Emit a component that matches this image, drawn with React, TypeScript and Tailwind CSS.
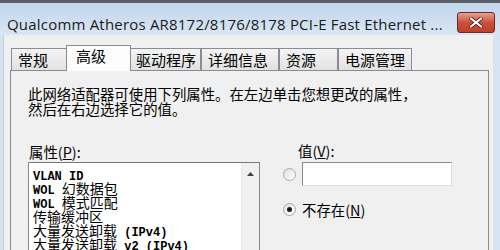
import React from 'react';

const cjk = '"Noto Sans CJK SC", "Liberation Sans", sans-serif';

// split Latin from CJK so the list can use a narrow mono for Latin runs
function Mixed({ text }: { text: string }) {
  const parts = text.match(/[\u3000-\u9fff\uff00-\uffef]+|[^\u3000-\u9fff\uff00-\uffef]+/g) || [];
  return (
    <>
      {parts.map((p, i) =>
        /[\u3000-\u9fff\uff00-\uffef]/.test(p) ? (
          <span key={i} className="text-[14px] leading-[14px] font-['Noto_Sans_CJK_SC']">{p}</span>
        ) : (
          <span key={i} className="text-[12px] leading-[14px] font-['Liberation_Mono'] font-semibold whitespace-pre">{p}</span>
        )
      )}
    </>
  );
}

const tabs = [
  { label: '常规', w: 'w-[57px]' },
  { label: '高级', w: 'w-[65px]', active: true },
  { label: '驱动程序', w: 'w-[72px]' },
  { label: '详细信息', w: 'w-[78px]' },
  { label: '资源', w: 'w-[59px]' },
  { label: '电源管理', w: 'w-[74px]' },
];

const items = [
  'VLAN ID',
  'WOL 幻数据包',
  'WOL 模式匹配',
  '传输缓冲区',
  '大量发送卸载 (IPv4)',
  '大量发送卸载 v2 (IPv4)',
];

export default function App() {
  return (
    <div className="w-[500px] h-[250px] overflow-hidden bg-[#d6e3f1] flex flex-col" style={{ fontFamily: cjk }}>
      {/* title bar */}
      <div className="h-[3px] shrink-0 bg-[#5b6068]" />
      <div className="h-[32px] shrink-0 flex items-center justify-between pl-[7px] pr-[5px] bg-gradient-to-b from-[#c3d6ec] to-[#d9e6f4]">
        <span className="text-[15px] text-[#1a1a1a] font-['Open_Sans'] tracking-[0.2px] mt-[11px]">
          Qualcomm Atheros AR8172/8176/8178 PCI-E Fast Ethernet ...
        </span>
        <div className="w-[38px] h-[21px] mt-[7px] rounded-[3px] border border-[#6b2a22] bg-gradient-to-b from-[#e3a392] via-[#c9503a] to-[#c23f2a] flex items-center justify-center">
          <svg width="14" height="11" viewBox="0 0 14 11">
            <path d="M2 1.5 L12 9.5 M12 1.5 L2 9.5" stroke="#5a1a10" strokeWidth="3.6" strokeLinecap="round" />
            <path d="M2 1.5 L12 9.5 M12 1.5 L2 9.5" stroke="#ffffff" strokeWidth="2.2" strokeLinecap="round" />
          </svg>
        </div>
      </div>

      {/* window body */}
      <div className="shrink-0 ml-[3px] mr-[7px] bg-[#f0f0f0] border-l border-[#c8d0d8] pl-[6px] pr-[4px] pt-[10px]">
        {/* tab strip */}
        <div className="flex items-end h-[25px] pl-[1px]">
          {tabs.map((t) =>
            t.active ? (
              <div
                key={t.label}
                className={`${t.w} h-[26px] -mb-px relative z-10 bg-[#fcfcfc] border border-b-0 border-[#898c95] -mx-[2px] text-[15px] text-black pl-[9px] leading-[20px]`}
              >
                {t.label}
              </div>
            ) : (
              <div
                key={t.label}
                className={`${t.w} h-[22px] bg-gradient-to-b from-[#f4f4f4] to-[#e2e2e2] border border-b-0 border-[#898c95] text-[15px] text-black pl-[6px] leading-[22px]`}
              >
                {t.label}
              </div>
            )
          )}
        </div>

        {/* tab panel */}
        <div className="h-[200px] border border-[#898c95] bg-[#f0f0f0] pl-[17px] pt-[15px]">
          <p className="text-[14.4px] leading-[15px] text-black">
            此网络适配器可使用下列属性。在左边单击您想更改的属性，
            <br />
            然后在右边选择它的值。
          </p>

          <div className="flex mt-[28px]">
            <div className="w-[232px]">
              <div className="text-[14.4px] leading-[15px] text-black mb-[3px] ml-[1px]">
                属性(<span className="underline">P</span>):
              </div>
              <div className="h-[100px] border border-[#828790] border-t-[#7a7a7a] bg-white flex">
                <div className="flex-1 pl-[4px] pt-[3px] flex flex-col text-black">
                  {items.map((it) => (
                    <div key={it} className="h-[14px] leading-[14px] whitespace-nowrap">
                      <Mixed text={it} />
                    </div>
                  ))}
                </div>
                <div className="w-[18px] bg-[#f0f0f0] border-l border-[#e8e8e8] flex justify-center pt-[9px]">
                  <svg width="7" height="4" viewBox="0 0 7 4">
                    <path d="M0 4 L3.5 0 L7 4 Z" fill="#404040" />
                  </svg>
                </div>
              </div>
            </div>

            <div className="ml-[37px] flex flex-col">
              <div className="text-[14.4px] leading-[15px] text-black ml-[1px] mt-[-1px]">
                值(<span className="underline">V</span>):
              </div>
              <div className="flex items-center mt-[4px] ml-[-14px]">
                <div className="w-[13px] h-[13px] rounded-full border border-[#a8a8a8] bg-gradient-to-br from-[#e0e0e0] to-[#ffffff]" />
                <div className="ml-[6px] w-[150px] h-[24px] bg-white border border-[#dcdcdc] border-t-[#8a8a8a] border-l-[#8a8a8a]" />
              </div>
              <div className="flex items-center mt-[16px] ml-[-14px]">
                <div className="w-[13px] h-[13px] rounded-full border border-[#a8a8a8] bg-gradient-to-br from-[#e0e0e0] to-[#ffffff] flex items-center justify-center">
                  <div className="w-[5px] h-[5px] rounded-full bg-[#1a1a1a]" />
                </div>
                <span className="ml-[6px] text-[14.4px] leading-[15px] text-black">
                  不存在(<span className="underline">N</span>)
                </span>
              </div>
            </div>
          </div>
        </div>
      </div>
    </div>
  );
}
